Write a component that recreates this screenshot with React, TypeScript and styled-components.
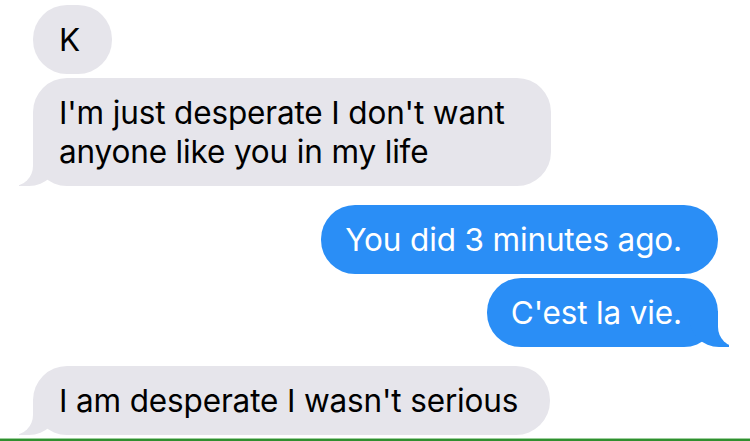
import styled, { createGlobalStyle } from "styled-components";

const GlobalStyle = createGlobalStyle`
    html, body {
        margin: 0;
        padding: 0;
        background: #fff;
    }
    body {
        font-family: Inter, "Noto Sans", "Liberation Sans", sans-serif;
        -webkit-font-smoothing: antialiased;
    }
`;

type Message = { text: string; tail?: boolean };
type Group = { mine: boolean; messages: Message[] };

const thread: Group[] = [
    {
        mine: false,
        messages: [
            { text: "K" },
            { text: "I'm just desperate I don't want anyone like you in my life", tail: true },
        ],
    },
    {
        mine: true,
        messages: [
            { text: "You did 3 minutes ago." },
            { text: "C'est la vie.", tail: true },
        ],
    },
    {
        mine: false,
        messages: [{ text: "I am desperate I wasn't serious", tail: true }],
    },
];

const App = () => {
    return (
        <Page>
            <GlobalStyle />
            <Thread>
                {thread.map((group, gi) => (
                    <MessageGroup key={gi} $mine={group.mine}>
                        {group.messages.map((m, mi) => (
                            <Bubble key={mi} $mine={group.mine} $tail={!!m.tail}>
                                {m.text}
                            </Bubble>
                        ))}
                    </MessageGroup>
                ))}
            </Thread>
            <BottomRule />
        </Page>
    );
};

const Page = styled.div`
    display: flex;
    flex-direction: column;
    width: 750px;
    height: 441px;
    padding-top: 5px;
    box-sizing: border-box;
    overflow: hidden;
`;

const Thread = styled.div`
    display: flex;
    flex-direction: column;
    gap: 19px;
    padding: 0 32px 0 33px;
`;

const MessageGroup = styled.div<{ $mine: boolean }>`
    display: flex;
    flex-direction: column;
    align-items: ${(p) => (p.$mine ? "flex-end" : "flex-start")};
    gap: 4px;
`;

const Bubble = styled.div<{ $mine: boolean; $tail: boolean }>`
    position: relative;
    box-sizing: border-box;
    max-width: 518px;
    padding: 15px 0;
    padding-left: ${(p) => (p.$mine ? "24px" : "26px")};
    padding-right: ${(p) => (p.$mine ? "36px" : "32px")};
    border-radius: 34px;
    font-size: 31.5px;
    line-height: 39px;
    letter-spacing: -0.15px;
    background: ${(p) => (p.$mine ? "#2a8ef6" : "#e6e5eb")};
    color: ${(p) => (p.$mine ? "#fff" : "#000")};

    &::before,
    &::after {
        content: "";
        display: ${(p) => (p.$tail ? "block" : "none")};
        position: absolute;
        bottom: 0;
        height: 36px;
    }
    &::before {
        width: 40px;
        background: ${(p) => (p.$mine ? "#2a8ef6" : "#e6e5eb")};
        ${(p) =>
            p.$mine
                ? "right: -11px; border-bottom-left-radius: 30px;"
                : "left: -14px; border-bottom-right-radius: 30px;"}
    }
    &::after {
        width: 52px;
        background: #fff;
        ${(p) =>
            p.$mine
                ? "right: -52px; border-bottom-left-radius: 20px;"
                : "left: -52px; border-bottom-right-radius: 20px;"}
    }
`;

const BottomRule = styled.div`
    margin-top: auto;
    height: 3px;
    border-top: 1px solid #9ccf9c;
    background: #2f8f2f;
    box-sizing: border-box;
`;

export default App;
